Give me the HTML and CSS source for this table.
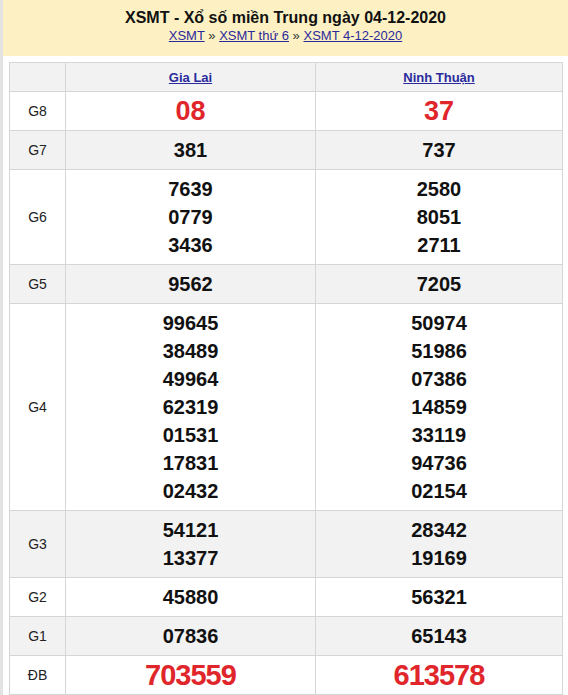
FILE: index.html
```html
<!DOCTYPE html>
<html lang="vi">
<head>
<meta charset="utf-8">
<link rel="stylesheet" href="styles.css">
</head>
<body>
<div class="page">
  <div class="head">
    <h1 class="title">XSMT - Xổ số miền Trung ngày 04-12-2020</h1>
    <div class="crumbs"><a href="#">XSMT</a> » <a href="#">XSMT thứ 6</a> » <a href="#">XSMT 4-12-2020</a></div>
  </div>
  <div class="wrap">
    <table class="kq">
      <colgroup><col class="c-lbl"><col class="c-a"><col class="c-b"></colgroup>
      <tr class="hdr"><th></th><th><a href="#">Gia Lai</a></th><th><a href="#">Ninh Thuận</a></th></tr>
      <tr><td class="lbl">G8</td><td class="n big">08</td><td class="n big">37</td></tr>
      <tr class="alt"><td class="lbl">G7</td><td class="n">381</td><td class="n">737</td></tr>
      <tr><td class="lbl">G6</td><td class="n">7639<br>0779<br>3436</td><td class="n">2580<br>8051<br>2711</td></tr>
      <tr class="alt"><td class="lbl">G5</td><td class="n">9562</td><td class="n">7205</td></tr>
      <tr><td class="lbl">G4</td><td class="n">99645<br>38489<br>49964<br>62319<br>01531<br>17831<br>02432</td><td class="n">50974<br>51986<br>07386<br>14859<br>33119<br>94736<br>02154</td></tr>
      <tr class="alt"><td class="lbl">G3</td><td class="n">54121<br>13377</td><td class="n">28342<br>19169</td></tr>
      <tr><td class="lbl">G2</td><td class="n">45880</td><td class="n">56321</td></tr>
      <tr class="alt"><td class="lbl">G1</td><td class="n">07836</td><td class="n">65143</td></tr>
      <tr><td class="lbl">ĐB</td><td class="n db">703559</td><td class="n db">613578</td></tr>
    </table>
  </div>
</div>
</body>
</html>
```
FILE: styles.css
```css
html, body {
  margin: 0;
  padding: 0;
  background: #fff;
}
body {
  font-family: "Liberation Sans", Arial, sans-serif;
  color: #111;
}
.page {
  border-left: 3px solid #e3e3e3;
  min-height: 695px;
  box-sizing: border-box;
}
.head {
  background: #fdf1c4;
  height: 56px;
  box-sizing: border-box;
  padding-top: 8px;
  text-align: center;
}
.title {
  margin: 0;
  font-size: 16px;
  line-height: 19px;
  font-weight: bold;
  color: #111;
}
.crumbs {
  font-size: 13px;
  line-height: 18px;
  color: #333;
}
.crumbs a {
  color: #2a2a9c;
}
.wrap {
  padding: 6px 5px 0 6px;
}
.kq {
  width: 100%;
  border-collapse: collapse;
  table-layout: fixed;
}
.c-lbl { width: 56px; }
.c-a { width: 250px; }
.kq th, .kq td {
  border: 1px solid #d6d6d6;
  text-align: center;
  padding: 0;
}
.hdr th {
  background: #f2f2f2;
  height: 28px;
  font-size: 13px;
  font-weight: bold;
}
.hdr a {
  color: #2a2a9c;
}
.alt td {
  background: #f2f2f2;
}
.lbl {
  font-size: 14px;
  color: #222;
}
.n {
  font-size: 20px;
  font-weight: bold;
  line-height: 28px;
  padding: 5px 0 5px 0 !important;
  color: #111;
}
.big {
  font-size: 27px;
  color: #e0262b;
}
.db {
  font-size: 29px;
  color: #e0262b;
  letter-spacing: -1px;
}
```
